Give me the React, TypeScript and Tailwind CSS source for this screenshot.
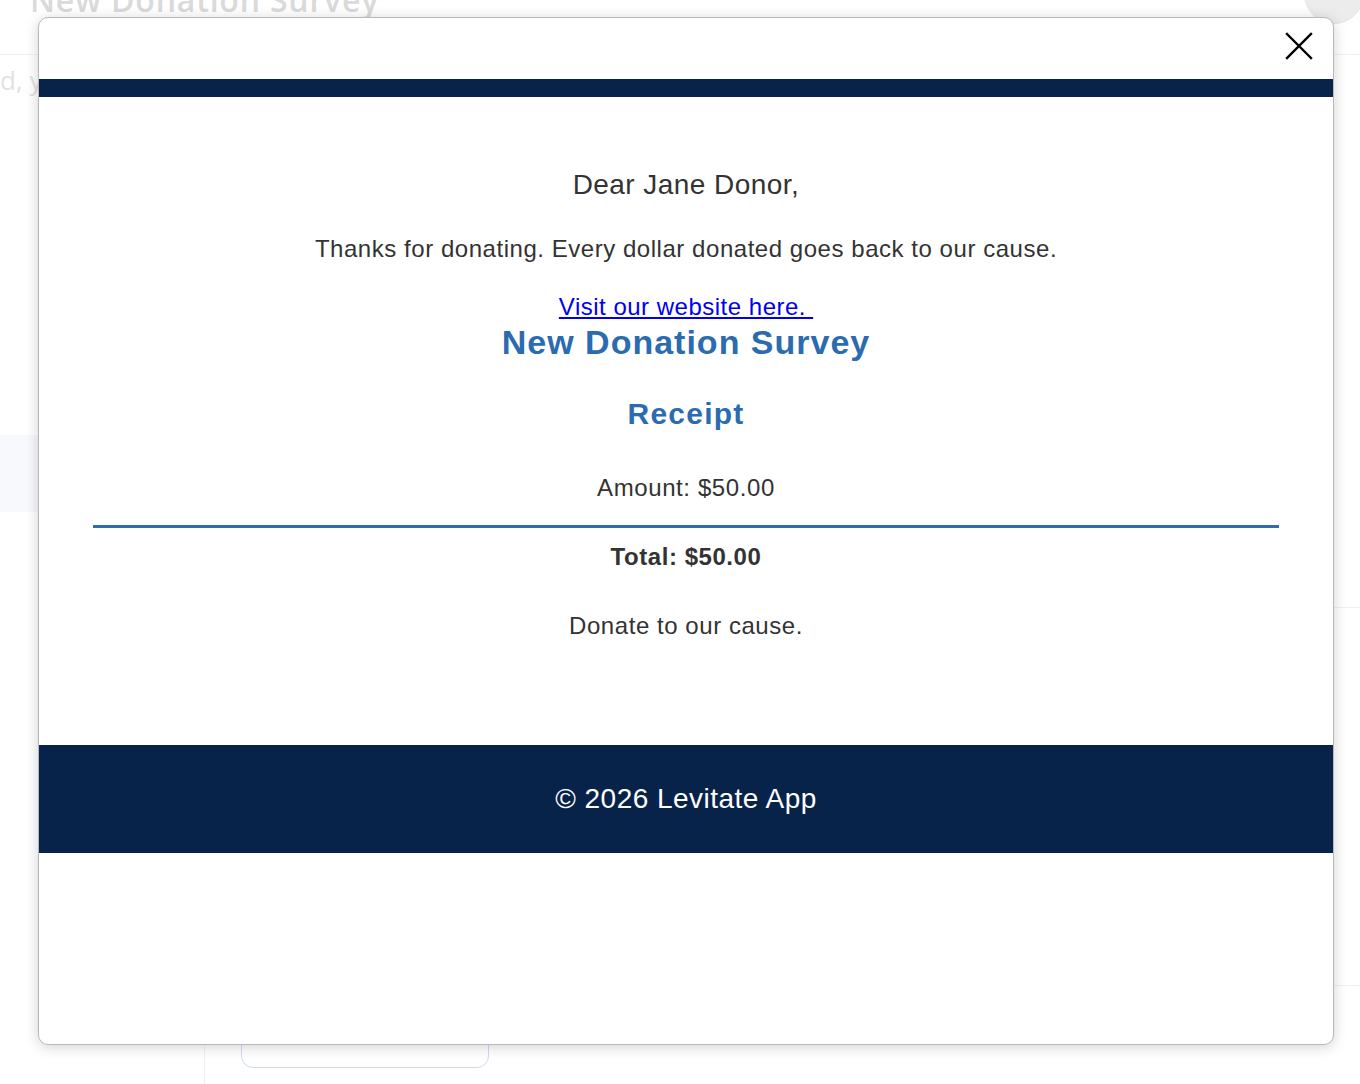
import * as React from "react";

function CloseIcon() {
  return (
    <svg width="28" height="28" viewBox="0 0 28 28" fill="none" stroke="#000" strokeWidth="2.4" strokeLinecap="square">
      <path d="M2 2 L26 26 M26 2 L2 26" />
    </svg>
  );
}

function BackgroundPage() {
  return (
    <div className="flex h-full flex-col font-['Open_Sans',sans-serif]">
      <header className="flex h-[55px] shrink-0 items-start justify-between border-b border-[#f1f1f1] pl-[30px]">
        <h1 className="-mt-[24px] text-[32px] font-semibold tracking-wide text-[#dadada]">New Donation Survey</h1>
        <div className="-mr-[4px] -mt-[36px] h-[60px] w-[60px] rounded-full border border-[#e4e4e4] bg-[#ececec]" />
      </header>
      <div className="flex flex-1">
        <aside className="flex w-[205px] shrink-0 flex-col border-r border-[#f1f1f1]">
          <p className="mt-[6px] whitespace-nowrap text-[26px] text-[#e2e2e2]">d, you</p>
          <div className="mt-[335px] h-[77px] bg-[#f7f9fc]" />
        </aside>
        <main className="flex flex-1 flex-col">
          <div className="mt-[552px] ml-auto h-[379px] w-[40px] border-y border-[#f1f1f1]" />
          <div className="mt-auto mb-[16px] ml-[36px] h-[40px] w-[248px] rounded-[12px] border border-[#cfd9f1]" />
        </main>
      </div>
    </div>
  );
}

function Modal() {
  return (
    <div className="absolute left-[38px] top-[17px] flex h-[1028px] w-[1296px] flex-col overflow-hidden rounded-[10px] border border-[#b9b9b9] bg-white shadow-[0_2px_14px_rgba(0,0,0,0.18)]">
      <div className="flex h-[61px] shrink-0 items-start justify-end pr-[20px] pt-[14px]">
        <button className="flex h-[28px] w-[28px] items-center justify-center">
          <CloseIcon />
        </button>
      </div>
      <div className="h-[18px] shrink-0 bg-[#08234a]" />
      <div className="flex shrink-0 flex-col items-center px-[54px] pt-[72px] text-center font-['Liberation_Sans',Arial,sans-serif] text-[#333]">
        <p className="text-[28px] leading-[32px] tracking-[0.45px]">Dear Jane Donor,</p>
        <p className="mt-[34px] text-[24px] leading-[28px] tracking-[0.54px]">
          Thanks for donating. Every dollar donated goes back to our cause.
        </p>
        <a href="#" className="mt-[30px] text-[24px] leading-[28px] tracking-[0.5px] text-[#0000ee] underline">
          Visit our website here.&nbsp;
        </a>
        <h2 className="mt-[1px] text-[34px] font-bold leading-[40px] tracking-[1px] text-[#2b6cb0]">New Donation Survey</h2>
        <h3 className="mt-[34px] text-[30px] font-bold leading-[36px] tracking-[1.2px] text-[#2b6cb0]">Receipt</h3>
        <p className="mt-[42px] text-[24px] leading-[28px] tracking-[0.6px]">Amount: $50.00</p>
        <div className="mt-[23px] h-[3px] w-full bg-[#2e6bb0]" />
        <p className="mt-[15px] text-[24px] font-bold leading-[28px] tracking-[0.55px]">Total: $50.00</p>
        <p className="mt-[41px] text-[24px] leading-[28px] tracking-[0.55px]">Donate to our cause.</p>
      </div>
      <div className="mt-auto mb-[191px] flex h-[108px] shrink-0 items-center justify-center bg-[#08234a] font-['Liberation_Sans',Arial,sans-serif] text-[28px] tracking-[0.47px] text-white">
        © 2026 Levitate App
      </div>
    </div>
  );
}

export default function App() {
  return (
    <div className="relative h-[1084px] w-[1360px] overflow-hidden bg-white">
      <BackgroundPage />
      <Modal />
    </div>
  );
}
